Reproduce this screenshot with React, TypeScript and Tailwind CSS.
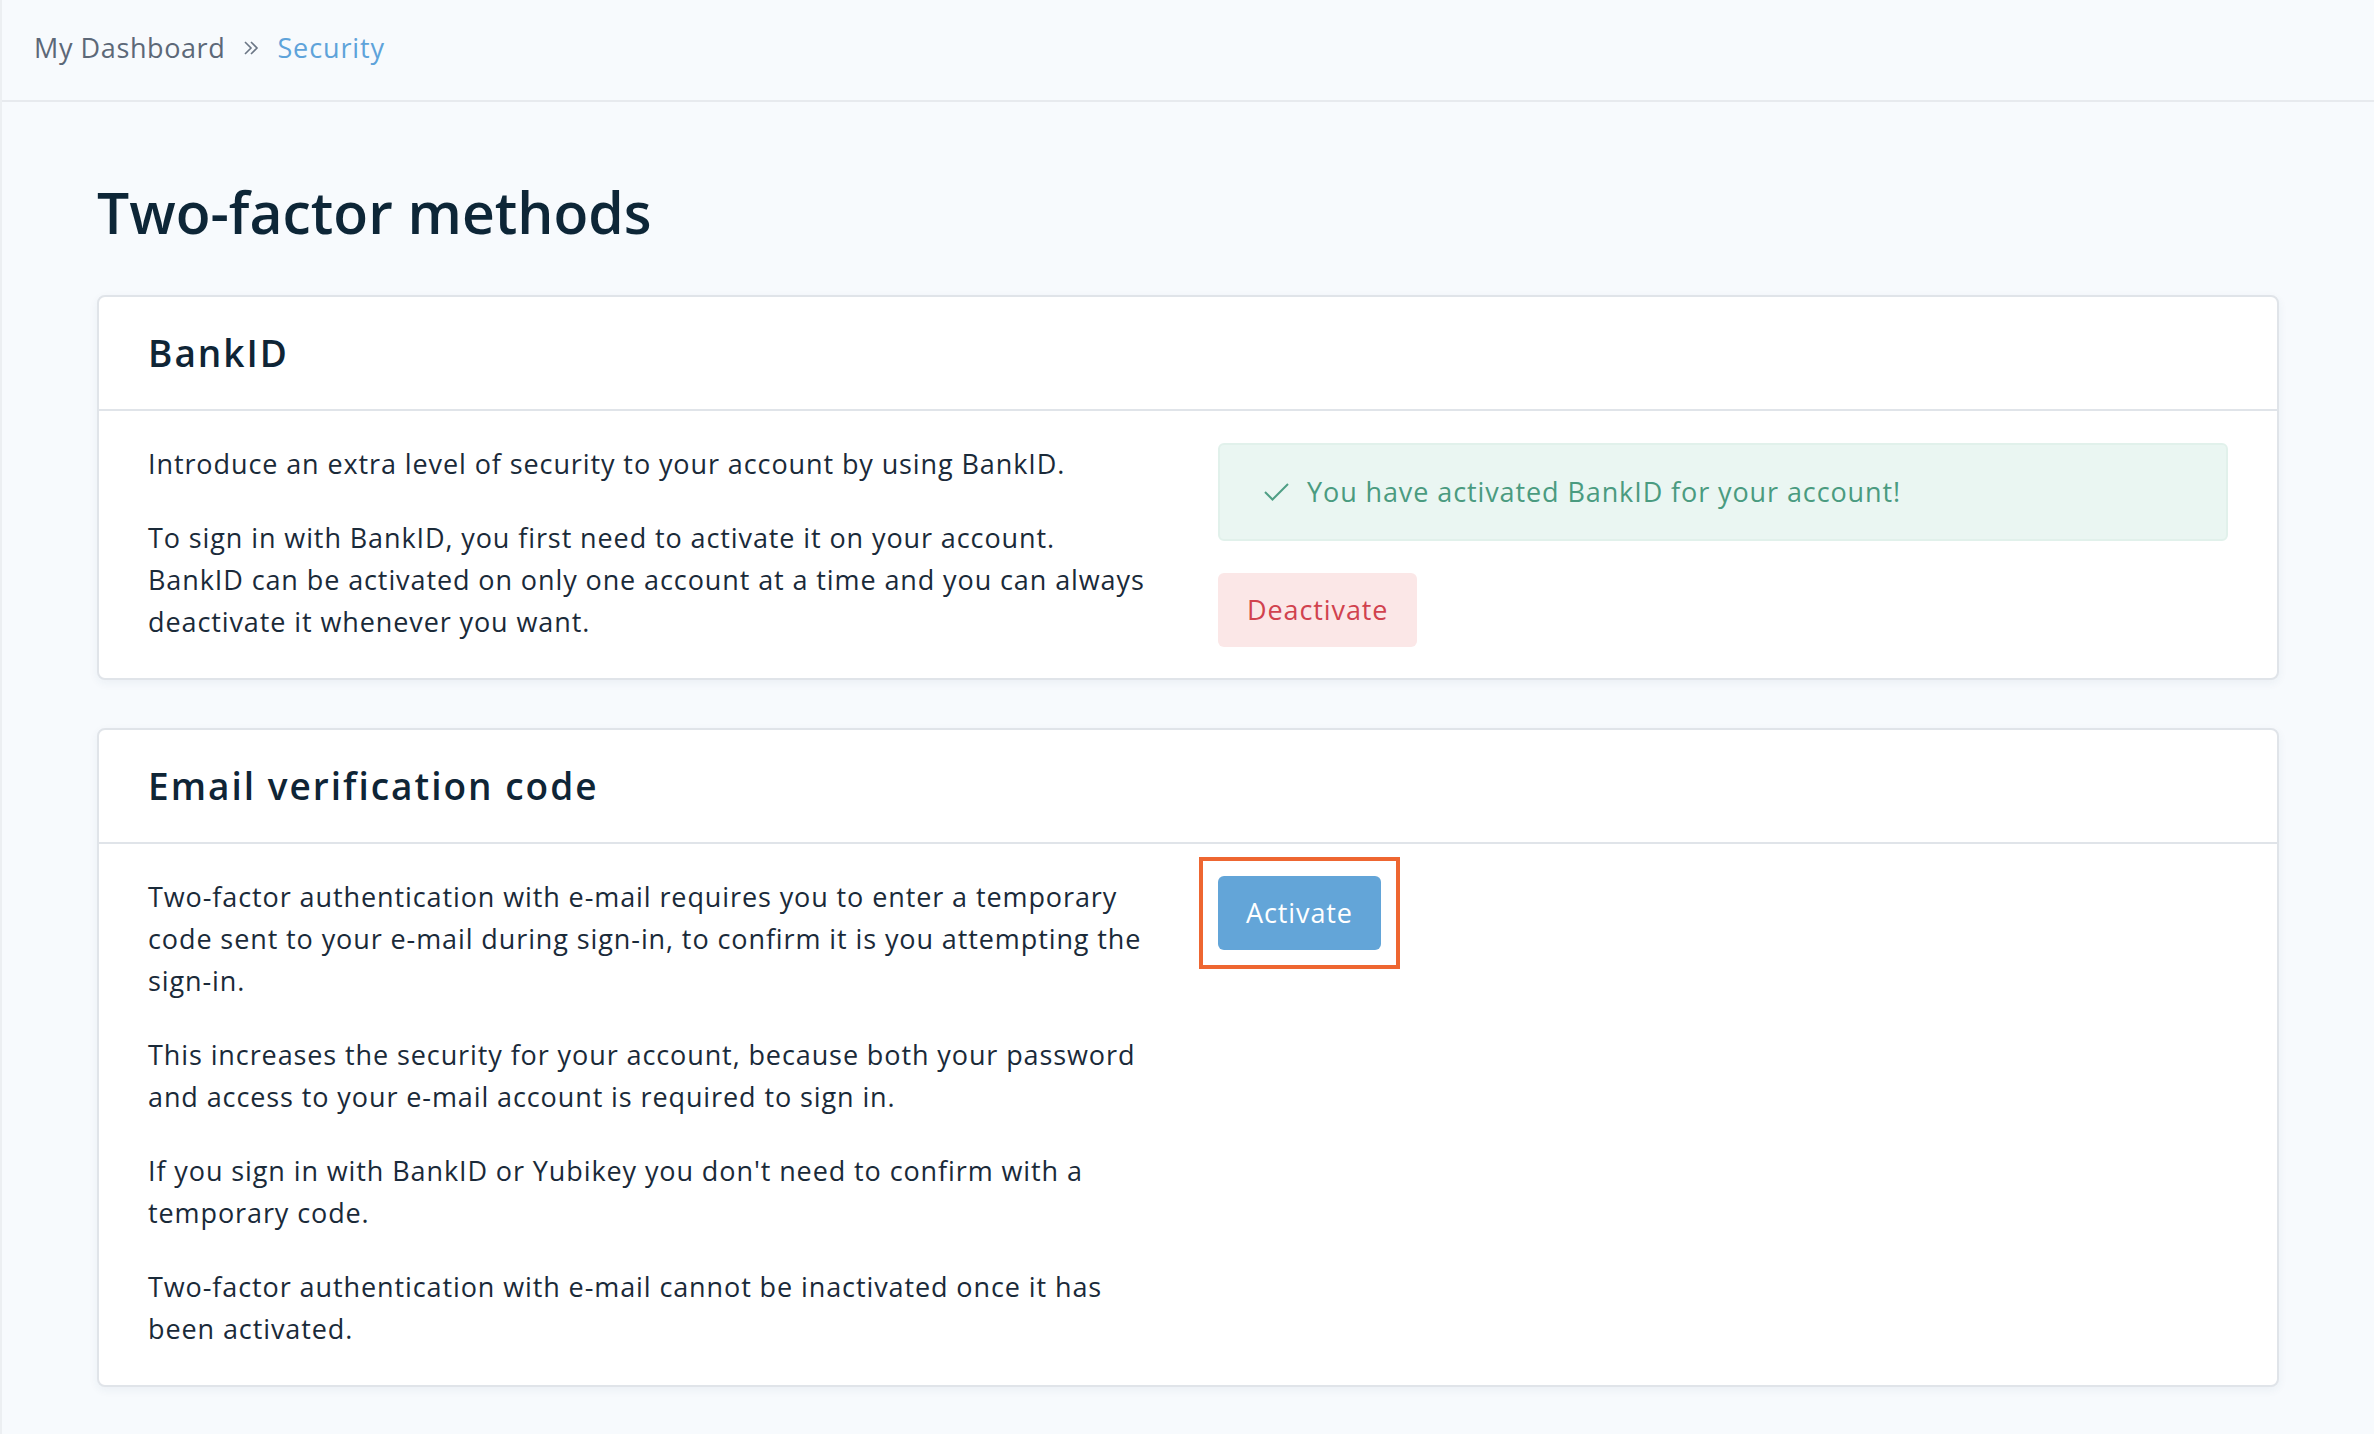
import React from "react";

function Chevrons() {
  return (
    <svg width="16" height="16" viewBox="0 0 16 16" fill="none" className="mx-[18px]">
      <path d="M2 2 L8 8 L2 14" stroke="#6b7685" strokeWidth="1.6" />
      <path d="M8 2 L14 8 L8 14" stroke="#6b7685" strokeWidth="1.6" />
    </svg>
  );
}

function Check() {
  return (
    <svg width="25" height="18" viewBox="0 0 25 18" fill="none" className="mr-[18px]">
      <path d="M1 9 L8.5 16.5 L24 1" stroke="#4f9f85" strokeWidth="2" />
    </svg>
  );
}

function Card({ title, children }: { title: string; children: React.ReactNode }) {
  return (
    <section className="bg-white border-2 border-[#e0e4e9] rounded-[8px] shadow-[0_3px_10px_rgba(40,70,110,0.06)]">
      <div className="h-[114px] flex items-center px-[49px] border-b-2 border-[#e0e4e9]">
        <h2 className="text-[37px] font-semibold text-[#0f2536] tracking-[2px]">{title}</h2>
      </div>
      <div className="grid grid-cols-2 gap-x-[60px] px-[49px] pt-[32px] pb-[3px]">{children}</div>
    </section>
  );
}

export default function App() {
  const p = "text-[27px] leading-[42px] tracking-[0.9px] text-[#1a2a39] mb-[32px]";
  return (
    <div className="min-h-screen bg-[#f7fafd] border-l-2 border-[#eceff2] font-['Open_Sans',sans-serif]">
      <header className="h-[102px] border-b-2 border-[#e7eaee] flex items-center pl-[32px] pb-[4px]">
        <span className="text-[27px] tracking-[0.6px] text-[#5c6878]">My Dashboard</span>
        <Chevrons />
        <span className="text-[27px] tracking-[0.9px] text-[#5ea3da]">Security</span>
      </header>
      <main className="px-[95px] pt-[72px]">
        <h1 className="text-[57px] leading-[76px] font-semibold text-[#0d2637] mb-[45px]">Two-factor methods</h1>
        <div className="flex flex-col gap-[48px]">
          <Card title="BankID">
            <div>
              <p className={p}>Introduce an extra level of security to your account by using BankID.</p>
              <p className={p}>
                To sign in with BankID, you first need to activate it on your account. BankID can be activated on only one account at a time and you can always deactivate it whenever you want.
              </p>
            </div>
            <div className="flex flex-col items-start gap-[32px]">
              <div className="w-full h-[98px] flex items-center pl-[44px] rounded-[6px] bg-[#eaf6f2] border-2 border-[#e1f1eb]">
                <Check />
                <span className="text-[27px] tracking-[0.9px] text-[#4a9b80]">You have activated BankID for your account!</span>
              </div>
              <button className="h-[74px] px-[29px] rounded-[6px] bg-[#fbe7e7] text-[27px] tracking-[0.9px] text-[#d1424e]">Deactivate</button>
            </div>
          </Card>
          <Card title="Email verification code">
            <div>
              <p className={p}>
                Two-factor authentication with e-mail requires you to enter a temporary code sent to your e-mail during sign-in, to confirm it is you attempting the sign-in.
              </p>
              <p className={p}>
                This increases the security for your account, because both your password and access to your e-mail account is required to sign in.
              </p>
              <p className={p}>If you sign in with BankID or Yubikey you don't need to confirm with a temporary code.</p>
              <p className={p}>Two-factor authentication with e-mail cannot be inactivated once it has been activated.</p>
            </div>
            <div className="flex flex-col items-start">
              <button className="relative h-[74px] px-[28px] rounded-[6px] bg-[#63a5d8] text-[27px] tracking-[0.9px] text-white">
                Activate
                <span className="pointer-events-none absolute -inset-[19px] border-4 border-[#ee6631]" />
              </button>
            </div>
          </Card>
          <section className="bg-white border-2 border-[#e0e4e9] rounded-[8px] h-[200px]" />
        </div>
      </main>
    </div>
  );
}
